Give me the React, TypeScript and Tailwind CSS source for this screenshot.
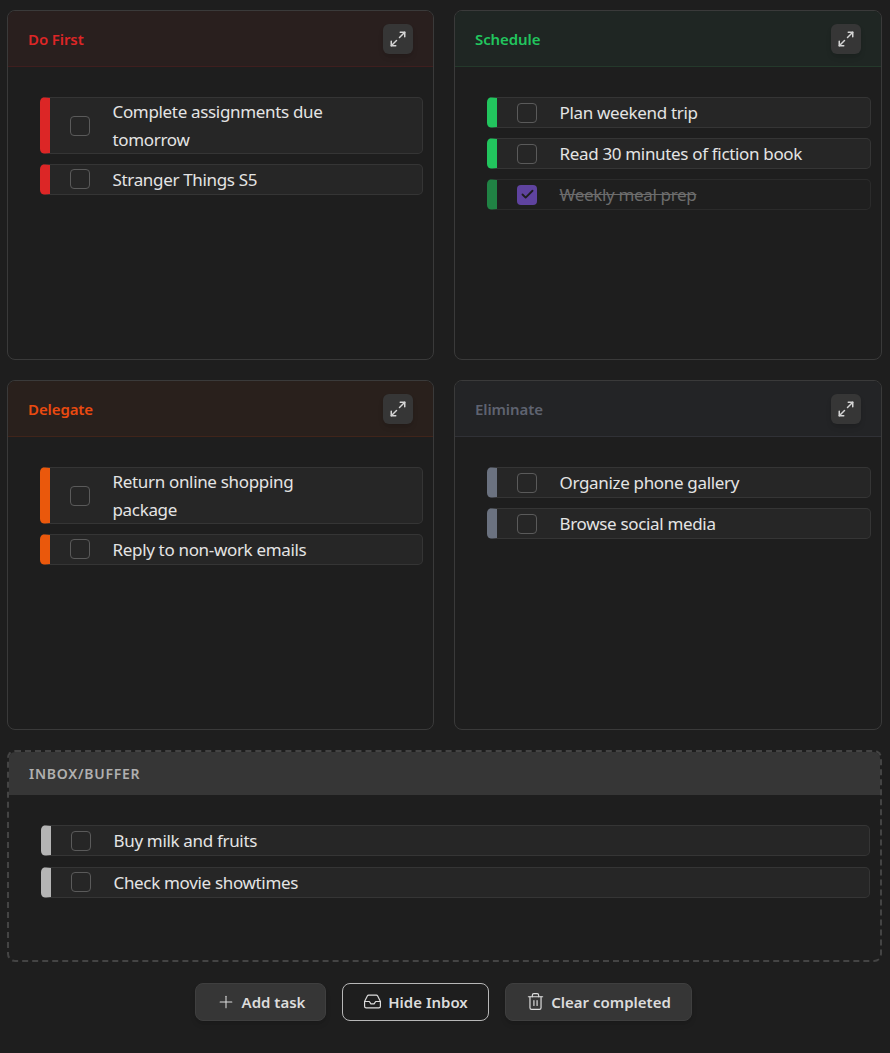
import { Maximize2, Plus, Inbox, Trash2, Check } from "lucide-react";

type Task = { text: string; done?: boolean };

const quadrants = [
  {
    title: "Do First",
    titleClass: "text-[#dc2626]",
    headerClass: "bg-[#291f1e] border-b-[#3f1e1e]",
    barClass: "border-l-[#dc2626]",
    tasks: [{ text: "Complete assignments due tomorrow" }, { text: "Stranger Things S5" }] as Task[],
  },
  {
    title: "Schedule",
    titleClass: "text-[#22c55e]",
    headerClass: "bg-[#1f2623] border-b-[#24392b]",
    barClass: "border-l-[#22c55e]",
    tasks: [
      { text: "Plan weekend trip" },
      { text: "Read 30 minutes of fiction book" },
      { text: "Weekly meal prep", done: true },
    ] as Task[],
  },
  {
    title: "Delegate",
    titleClass: "text-[#ea4a10]",
    headerClass: "bg-[#29201c] border-b-[#40241a]",
    barClass: "border-l-[#ea580c]",
    tasks: [{ text: "Return online shopping package" }, { text: "Reply to non-work emails" }] as Task[],
  },
  {
    title: "Eliminate",
    titleClass: "text-[#5f6370]",
    headerClass: "bg-[#232426] border-b-[#303136]",
    barClass: "border-l-[#6b7280]",
    tasks: [{ text: "Organize phone gallery" }, { text: "Browse social media" }] as Task[],
  },
];

function TaskRow({ task, barClass, wide }: { task: Task; barClass: string; wide?: boolean }) {
  return (
    <div
      className={`flex items-center min-h-[31px] rounded-[5px] border border-[#353535] border-l-[10px] ${barClass} ${
        task.done ? "bg-[#212121] opacity-60" : "bg-[#262626]"
      } ${wide ? "pr-4" : "pr-[64px]"}`}
    >
      {task.done ? (
        <span className="ml-5 shrink-0 w-5 h-5 rounded-[4px] bg-[#8b5cf6] flex items-center justify-center text-[#1e1e1e]">
          <Check size={15} strokeWidth={3} />
        </span>
      ) : (
        <span className="ml-5 shrink-0 w-5 h-5 rounded-[4px] border border-[#5a5a5a]" />
      )}
      <span
        className={`ml-[22.5px] text-[17px] leading-[27.25px] tracking-[-0.33px] ${
          task.done ? "text-[#a0a0a0] line-through" : "text-[#e4e4e4]"
        }`}
      >
        {task.text}
      </span>
    </div>
  );
}

export default function App() {
  return (
    <div className="min-h-screen bg-[#1e1e1e] pl-[7px] pr-[8px] pt-[10px] font-['Noto_Sans',sans-serif]">
      <div className="grid grid-cols-[427px_428px] gap-x-5 gap-y-5">
        {quadrants.map((q) => (
          <section key={q.title} className="h-[350px] rounded-lg border border-[#3a3a3a] overflow-hidden">
            <header className={`h-[56px] flex items-center justify-between pl-5 pr-5 border-b ${q.headerClass}`}>
              <h2 className={`pt-0.5 text-[15px] font-semibold tracking-[-0.1px] ${q.titleClass}`}>{q.title}</h2>
              <button className="w-[30px] h-[30px] rounded-md bg-[#363636] shadow-md flex items-center justify-center text-[#d4d4d4]">
                <Maximize2 size={18} strokeWidth={2} />
              </button>
            </header>
            <div className="pt-[30.3px] pl-8 pr-[10px] flex flex-col gap-[10px]">
              {q.tasks.map((t) => (
                <TaskRow key={t.text} task={t} barClass={q.barClass} />
              ))}
            </div>
          </section>
        ))}
      </div>

      {/* Inbox */}
      <section className="mt-5 h-[212px] rounded-lg border-2 border-dashed border-[#444444] overflow-hidden">
        <header className="h-[43px] bg-[#363636] flex items-center pl-5">
          <h2 className="text-sm font-semibold tracking-[0.75px] text-[#b0b0b0]">INBOX/BUFFER</h2>
        </header>
        <div className="pt-[30.3px] pl-8 pr-[10px] flex flex-col gap-[10.4px]">
          <TaskRow task={{ text: "Buy milk and fruits" }} barClass="border-l-[#b5b5b5]" wide />
          <TaskRow task={{ text: "Check movie showtimes" }} barClass="border-l-[#b5b5b5]" wide />
        </div>
      </section>

      <div className="mt-[20.5px] pr-0.5 flex justify-center gap-[15.75px] text-[15px] font-semibold text-[#dcdcdc]">
        <button className="h-[38px] w-[131px] rounded-lg bg-[#363636] border border-[#3f3f3f] shadow-md flex items-center justify-center gap-1.5">
          <Plus size={20} strokeWidth={1.25} />
          <span className="pt-px">Add task</span>
        </button>
        <button className="h-[38px] w-[147.5px] rounded-lg border border-[#b8b8b8] flex items-center justify-center gap-1.5">
          <Inbox size={19} strokeWidth={1.5} />
          <span className="pt-px">Hide Inbox</span>
        </button>
        <button className="h-[38px] w-[187px] rounded-lg bg-[#363636] border border-[#3f3f3f] shadow-md flex items-center justify-center gap-1.5">
          <Trash2 size={19} strokeWidth={1.5} />
          <span className="pt-px">Clear completed</span>
        </button>
      </div>
    </div>
  );
}
